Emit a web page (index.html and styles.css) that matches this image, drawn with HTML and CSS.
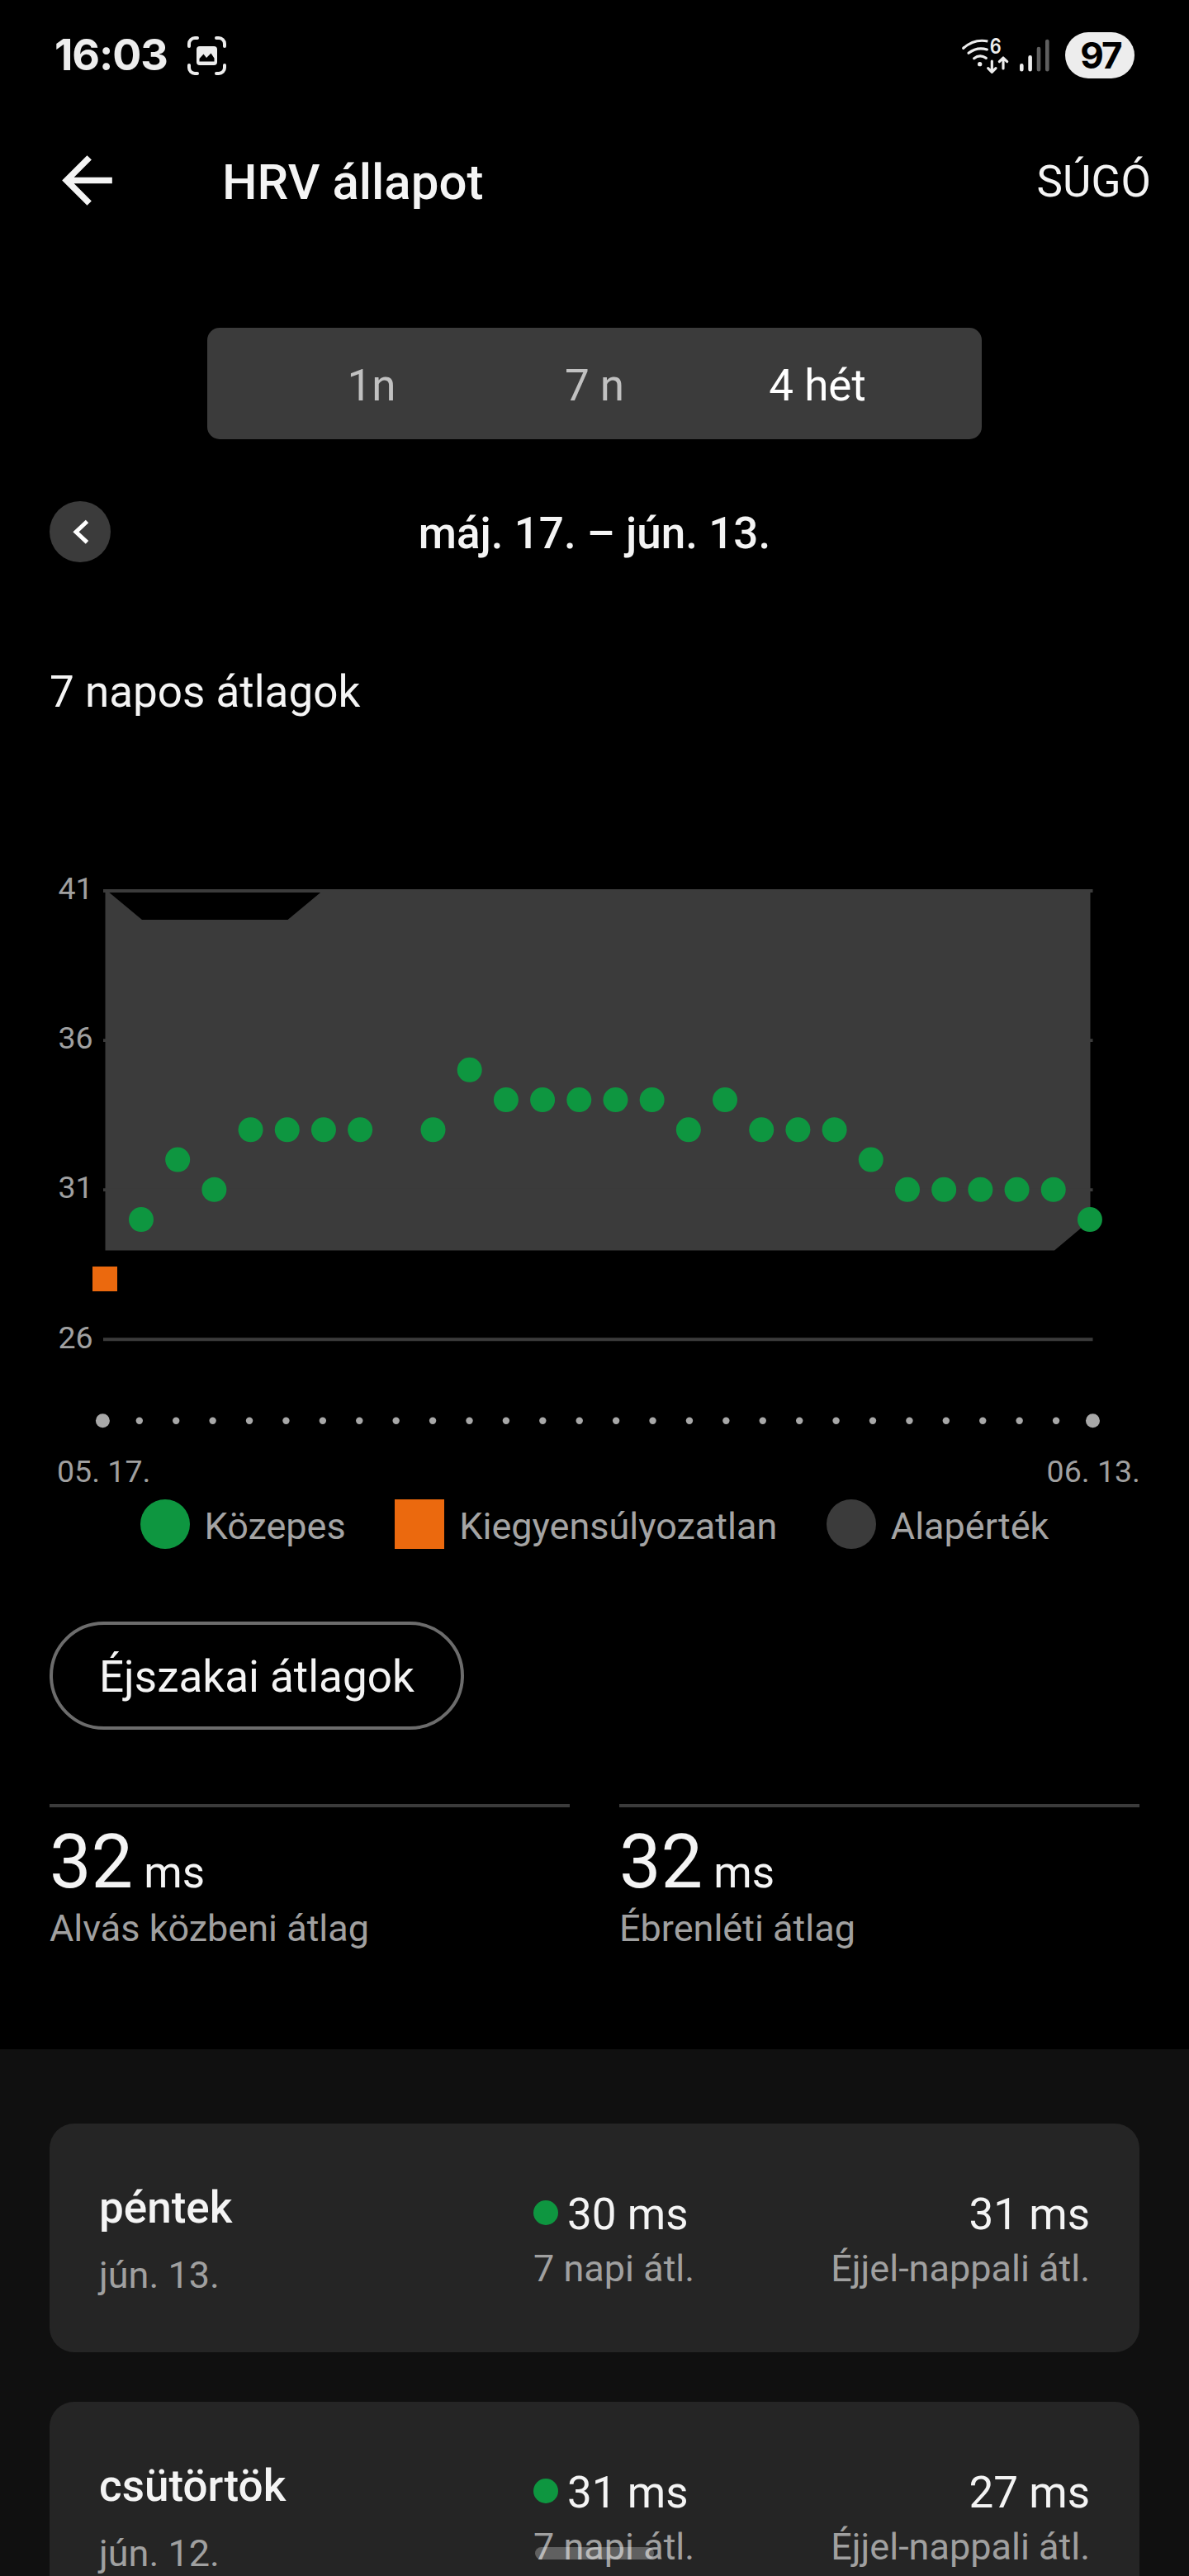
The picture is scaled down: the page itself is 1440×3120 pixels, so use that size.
FILE: index.html
```html
<!DOCTYPE html>
<html lang="hu">
<head>
<meta charset="utf-8">
<title>HRV állapot</title>
<link rel="stylesheet" href="styles.css">
</head>
<body>
<div class="screen">
  <div class="status-bar">
    <span class="clock">16:03</span>
    <svg class="shot-icon" width="47" height="47" viewBox="0 0 47 47">
      <g fill="none" stroke="#ededed" stroke-width="4" stroke-linecap="round">
        <path d="M2 12V9a7 7 0 0 1 7-7h3M35 2h3a7 7 0 0 1 7 7v3M45 35v3a7 7 0 0 1-7 7h-3M12 45H9a7 7 0 0 1-7-7v-3"/>
      </g>
      <rect x="11" y="12" width="25" height="23" rx="4" fill="#ededed"/>
      <path d="M14.500 30.500v-3.500l5-5.500 3.500 4.500 5.500-5.500 4 6v4z" fill="#000"/>
    </svg>
    <span class="spacer"></span>
    <svg class="wifi-icon" width="58" height="64" viewBox="72 46 174 192">
      <g fill="none" stroke="#ededed" stroke-width="9.500" stroke-linecap="round" stroke-linejoin="round">
        <path d="M80 116Q120 81 169 91" stroke-linecap="butt"/>
        <path d="M80 116l1-1"/>
        <path d="M99 134Q130 110 166 121"/>
        <path d="M119 153Q140 137 163 152"/>
        <path d="M184 163v39M170 189l14 14 14-14M225 190v-39M211 165l14-14 14 14"/>
      </g>
      <circle cx="140" cy="174" r="8" fill="#ededed"/>
      <text class="wifi-gen" x="176" y="137" textLength="42" lengthAdjust="spacingAndGlyphs">6</text>
    </svg>
    <svg class="signal-icon" width="36" height="40" viewBox="0 0 36 40">
      <g stroke-width="4.600" stroke-linecap="round" fill="none">
        <path d="M2.300 32.300v5M12.600 22.300v15" stroke="#ededed"/>
        <path d="M23 12v25.300M33.300 3v34.300" stroke="#5f5f5f"/>
      </g>
    </svg>
    <span class="battery">97</span>
  </div>

  <header class="app-bar">
    <svg class="back-icon" width="91" height="91" viewBox="0 0 24 24"><path fill="#f4f4f4" d="M20 11H7.830l5.590-5.590L12 4l-8 8 8 8 1.410-1.410L7.830 13H20v-2z"/></svg>
    <h1 class="title">HRV állapot</h1>
    <a class="help">SÚGÓ</a>
  </header>

  <div class="segments">
    <span class="segment">1n</span>
    <span class="segment">7 n</span>
    <span class="segment segment-active">4 hét</span>
  </div>

  <div class="date-nav">
    <span class="prev"><svg width="74" height="74" viewBox="0 0 74 74"><path d="M45.500 24.500L32 37.200l13.500 12.700" fill="none" stroke="#fff" stroke-width="5"/></svg></span>
    <span class="range">máj. 17. – jún. 13.</span>
  </div>

  <h2 class="section-title">7 napos átlagok</h2>

  <svg class="chart" width="1440" height="776" viewBox="0 1040 1440 776">
    <g fill="#3b3b3b">
      <path d="M127.500 1077L172 1114H348.500L393 1077H1320.500V1478L1277 1514.500H127.500z"/>
      <path d="M125 1077h1198.500v4H125zM125 1258.300h1198.500v3.700H125zM125 1439.300h1198.500v3.700H125zM125 1620.300h1198.500v4H125z"/>
    </g>
    <rect x="112" y="1534" width="30" height="30" fill="#eb690e"/>
    <g id="points" fill="#0e9640"></g>
    <g id="ticks" fill="#a8a8a8"></g>
    <g class="axis-text">
      <text x="70.500" y="1089">41</text>
      <text x="70.500" y="1270">36</text>
      <text x="70.500" y="1451">31</text>
      <text x="70.500" y="1632.500">26</text>
      <text x="69" y="1795">05. 17.</text>
      <text x="1381" y="1795" text-anchor="end">06. 13.</text>
    </g>
  </svg>

  <div class="legend">
    <span class="legend-item"><i class="swatch swatch-good"></i><span class="legend-label">Közepes</span></span>
    <span class="legend-item"><i class="swatch swatch-unbalanced"></i><span class="legend-label">Kiegyensúlyozatlan</span></span>
    <span class="legend-item"><i class="swatch swatch-base"></i><span class="legend-label">Alapérték</span></span>
  </div>

  <div class="chip">Éjszakai átlagok</div>

  <div class="stats">
    <div class="stat">
      <div class="stat-value">32<span class="unit"> ms</span></div>
      <div class="stat-label">Alvás közbeni átlag</div>
    </div>
    <div class="stat">
      <div class="stat-value">32<span class="unit"> ms</span></div>
      <div class="stat-label">Ébrenléti átlag</div>
    </div>
  </div>

  <div class="days">
    <div class="card">
      <div class="day">
        <div class="day-name">péntek</div>
        <div class="muted day-date">jún. 13.</div>
      </div>
      <div class="reading">
        <div class="reading-value"><i class="dot"></i>30 ms</div>
        <div class="muted">7 napi átl.</div>
      </div>
      <div class="reading reading-end">
        <div class="reading-value">31 ms</div>
        <div class="muted">Éjjel-nappali átl.</div>
      </div>
    </div>
    <div class="card">
      <div class="day">
        <div class="day-name">csütörtök</div>
        <div class="muted day-date">jún. 12.</div>
      </div>
      <div class="reading">
        <div class="reading-value"><i class="dot"></i>31 ms</div>
        <div class="muted">7 napi átl.</div>
      </div>
      <div class="reading reading-end">
        <div class="reading-value">27 ms</div>
        <div class="muted">Éjjel-nappali átl.</div>
      </div>
    </div>
  </div>
  <div class="home-pill"></div>
</div>
<script src="chart.js"></script>
</body>
</html>
```
FILE: styles.css
```css
* { box-sizing: border-box; }
body { margin: 0; background: #000; }
.screen {
  position: relative;
  width: 1440px;
  height: 3120px;
  overflow: hidden;
  display: flex;
  flex-direction: column;
  background: #000;
  color: #f4f4f4;
  font-family: Roboto, "Liberation Sans", sans-serif;
  font-size: 53px;
  line-height: 62px;
}
.screen > * { flex-shrink: 0; }
svg { display: block; }

.status-bar {
  display: flex;
  align-items: center;
  height: 134px;
  padding: 0 66px;
  color: #ededed;
}
.clock {
  width: 161px;
  font: 700 52px/60px Inter, sans-serif;
  letter-spacing: -1.1px;
}
.spacer { flex: 1; }
.wifi-icon { margin-right: 13px; }
.wifi-gen { font: 600 77px Inter, sans-serif; fill: #ededed; }
.signal-icon { margin-right: 19px; }
.battery {
  width: 84px;
  height: 56px;
  padding-left: 2px;
  border-radius: 28px;
  background: #ededed;
  color: #000;
  font: 700 44px/57px Inter, sans-serif;
  letter-spacing: -2px;
  text-align: center;
}

.app-bar {
  display: flex;
  align-items: center;
  height: 169px;
  padding: 0 46px 0 60px;
}
.title {
  flex: 1;
  margin: 4px 0 0 118px;
  font-size: 60px;
  font-weight: 500;
  line-height: 70px;
}
.help { padding-top: 3px; }

.segments {
  display: grid;
  grid-template-columns: repeat(3, 270px);
  align-self: center;
  width: 938px;
  height: 135px;
  margin-top: 94px;
  padding: 4px 64px 0;
  align-items: center;
  border-radius: 15px;
  background: #3b3b3b;
  color: #c1c1c1;
  text-align: center;
}
.segment-active { color: #fff; }

.date-nav {
  display: grid;
  grid-template-columns: 74px 1fr 74px;
  align-items: center;
  height: 74px;
  margin-top: 75px;
  padding: 0 60px;
}
.prev { height: 74px; border-radius: 50%; background: #3b3b3b; }
.range { padding-top: 3px; font-weight: 500; text-align: center; }

.section-title {
  margin: 117px 60px 0;
  font-size: 53px;
  font-weight: 400;
  line-height: 80px;
}
.chart { margin-top: 162px; }
.axis-text { fill: #a0a0a0; font-size: 37.5px; }

.legend {
  display: flex;
  justify-content: center;
  gap: 59.5px;
  font-size: 45px;
  color: #a4a4a4;
}
.legend-item { display: flex; align-items: center; gap: 18px; height: 60px; }
.legend-label { padding-top: 5px; }
.swatch { width: 60px; height: 60px; }
.swatch-good { border-radius: 50%; background: #0e9640; }
.swatch-unbalanced { background: #eb690e; }
.swatch-base { border-radius: 50%; background: #3b3b3b; }

.chip {
  align-self: flex-start;
  height: 131px;
  margin: 88px 0 0 60px;
  padding: 32px 56px 0;
  border: 4px solid #6c6c6c;
  border-radius: 66px;
}

.stats {
  display: grid;
  grid-template-columns: 1fr 1fr;
  gap: 60px;
  height: 297px;
  margin: 90px 60px 0;
}
.stat { border-top: 4px solid #3b3b3b; height: 180px; padding-top: 17px; }
.stat-value { font-size: 90px; line-height: 100px; white-space: pre; }
.unit { font-size: 53px; line-height: 1; }
.stat-label {
  margin-top: 3px;
  font-size: 45px;
  line-height: 54px;
  color: #a0a0a0;
}

.days {
  display: flex;
  flex-direction: column;
  gap: 60px;
  height: 638px;
  padding: 90px 60px 0;
  overflow: hidden;
  background: #101010;
}
.card {
  display: grid;
  grid-template-columns: 526px auto 1fr;
  flex: 0 0 277px;
  padding: 0 60px;
  border-radius: 30px;
  background: #252525;
}
.day { padding-top: 71px; }
.day-name { font-weight: 500; }
.muted { margin-top: 8px; font-size: 45px; line-height: 54px; color: #a0a0a0; }
.day-date { margin-top: 24px; }
.reading { padding-top: 79px; }
.reading-value { display: flex; align-items: center; }
.reading-end .reading-value { justify-content: flex-end; }
.reading-end { text-align: right; }
.dot {
  width: 30px;
  height: 30px;
  margin: 0 11px 4px 0;
  border-radius: 50%;
  background: #0e9640;
}

.home-pill {
  position: absolute;
  left: 648px;
  top: 3085px;
  width: 144px;
  height: 15px;
  border-radius: 8px;
  background: rgba(255, 255, 255, .27);
}
```
FILE: chart.js
```js
const NS = "http://www.w3.org/2000/svg";
const values = [null, 30, 32, 31, 33, 33, 33, 33, null, 33, 35, 34, 34, 34, 34, 34, 33, 34, 33, 33, 33, 32, 31, 31, 31, 31, 31, 30];

function circle(parent, cx, cy, r) {
  const c = document.createElementNS(NS, "circle");
  c.setAttribute("cx", cx);
  c.setAttribute("cy", cy);
  c.setAttribute("r", r);
  parent.appendChild(c);
}

const points = document.getElementById("points");
const ticks = document.getElementById("ticks");
values.forEach((v, i) => {
  if (v !== null) circle(points, 126.8 + i * 44.19, 1622 - (v - 26) * 36.24, 15);
  const end = i === 0 || i === values.length - 1;
  circle(ticks, 124.4 + i * 44.41, 1720.8, end ? 8.5 : 4.2);
});
```
